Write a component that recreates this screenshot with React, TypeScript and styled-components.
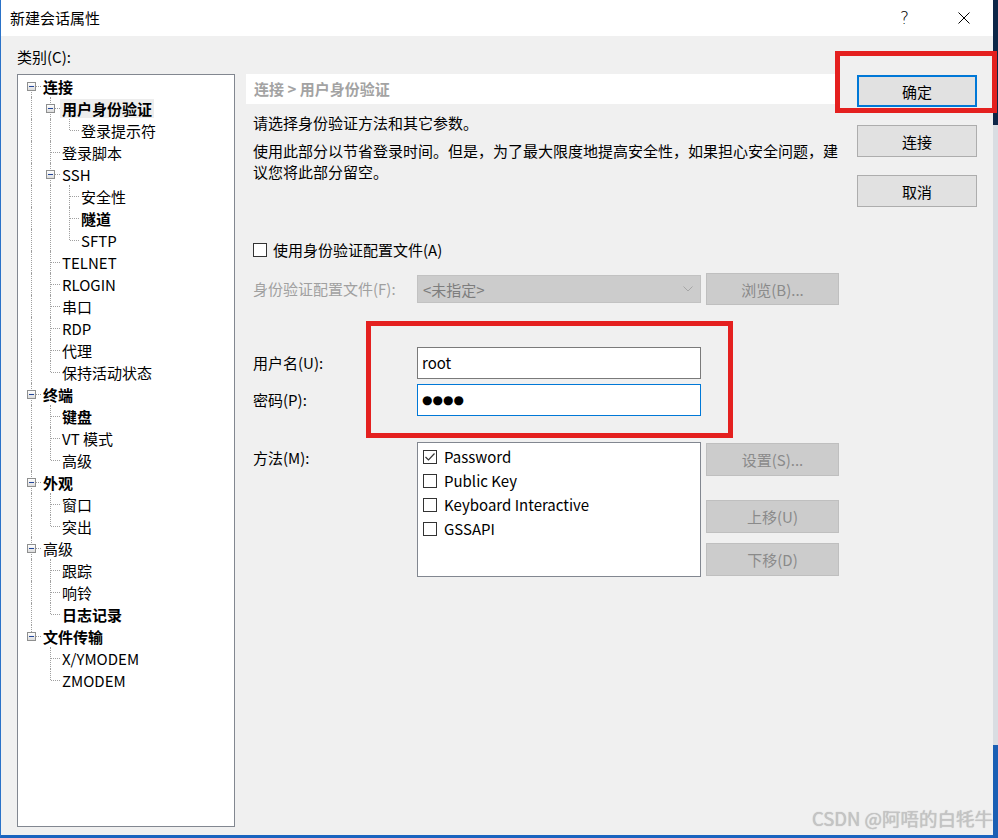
import React from "react";
import styled, { createGlobalStyle } from "styled-components";

const GlobalStyle = createGlobalStyle`
  html, body {
    margin: 0;
    padding: 0;
  }
  body {
    width: 998px;
    height: 838px;
    overflow: hidden;
    background: #f0f0f0;
    font-family: "Noto Sans CJK SC", "Noto Sans", sans-serif;
    color: #000;
  }
  #root {
    height: 100%;
  }
`;

type TreeNode = {
  label: string;
  level: number;
  bold?: boolean;
  open?: boolean;
  selected?: boolean;
};

const tree: TreeNode[] = [
  { label: "连接", level: 0, bold: true, open: true },
  { label: "用户身份验证", level: 1, bold: true, open: true, selected: true },
  { label: "登录提示符", level: 2 },
  { label: "登录脚本", level: 1 },
  { label: "SSH", level: 1, open: true },
  { label: "安全性", level: 2 },
  { label: "隧道", level: 2, bold: true },
  { label: "SFTP", level: 2 },
  { label: "TELNET", level: 1 },
  { label: "RLOGIN", level: 1 },
  { label: "串口", level: 1 },
  { label: "RDP", level: 1 },
  { label: "代理", level: 1 },
  { label: "保持活动状态", level: 1 },
  { label: "终端", level: 0, bold: true, open: true },
  { label: "键盘", level: 1, bold: true },
  { label: "VT 模式", level: 1 },
  { label: "高级", level: 1 },
  { label: "外观", level: 0, bold: true, open: true },
  { label: "窗口", level: 1 },
  { label: "突出", level: 1 },
  { label: "高级", level: 0, open: true },
  { label: "跟踪", level: 1 },
  { label: "响铃", level: 1 },
  { label: "日志记录", level: 1, bold: true },
  { label: "文件传输", level: 0, bold: true, open: true },
  { label: "X/YMODEM", level: 1 },
  { label: "ZMODEM", level: 1 },
];

const hasNext = (i: number) => {
  const lvl = tree[i].level;
  for (let j = i + 1; j < tree.length; j++) {
    if (tree[j].level < lvl) return false;
    if (tree[j].level === lvl) return true;
  }
  return false;
};

const ancestorAt = (i: number, lvl: number) => {
  for (let j = i - 1; j >= 0; j--) {
    if (tree[j].level === lvl) return j;
  }
  return -1;
};

const Page = styled.div`
  display: flex;
  width: 998px;
  height: 838px;
`;

const Window = styled.div`
  position: relative;
  width: 993px;
  height: 838px;
  box-sizing: border-box;
  border-left: 1px solid #2a72c8;
  border-bottom: 3px solid #1a64bf;
  display: flex;
  flex-direction: column;
  background: #f0f0f0;
`;

const Desktop = styled.div`
  flex: 1;
  background: linear-gradient(
    to bottom,
    #0d2748 0,
    #0d2748 125px,
    #d9dde2 125px,
    #d9dde2 745px,
    #1a5fb4 745px
  );
`;

const TitleBar = styled.div`
  height: 36px;
  flex: 0 0 36px;
  background: #fff;
  display: flex;
  align-items: center;
  padding-left: 9px;
  font-size: 15px;
`;

const TitleText = styled.div`
  flex: 1;
  line-height: 20px;
`;

const CaptionButton = styled.div`
  width: 59px;
  height: 36px;
  display: flex;
  align-items: center;
  justify-content: center;
  font-family: "DejaVu Sans", sans-serif;
  font-size: 17px;
  font-weight: 300;
`;

const Body = styled.div`
  flex: 1;
  display: flex;
  padding: 0 0 8px 16px;
  min-height: 0;
`;

const LeftColumn = styled.div`
  width: 218px;
  display: flex;
  flex-direction: column;
`;

const FieldCaption = styled.div`
  margin: 11px 0 7px;
  font-size: 15px;
  line-height: 20px;
`;

const TreeBox = styled.div`
  flex: 1;
  background: #fff;
  border: 1px solid #828790;
  padding: 0 0 0 4px;
`;

const TreeRow = styled.div`
  display: flex;
  align-items: center;
  height: 22px;
`;

const Guide = styled.span<{ $top: boolean; $bottom: boolean; $arm: boolean }>`
  position: relative;
  flex: 0 0 19px;
  height: 22px;

  &::before {
    content: "";
    position: absolute;
    left: 9px;
    top: ${(p) => (p.$top ? "0" : "11px")};
    bottom: ${(p) => (p.$bottom ? "0" : "11px")};
    border-left: 1px dotted #a0a0a0;
    display: ${(p) => (p.$top || p.$bottom ? "block" : "none")};
  }

  &::after {
    content: "";
    position: absolute;
    left: 10px;
    right: 0;
    top: 11px;
    border-top: 1px dotted #a0a0a0;
    display: ${(p) => (p.$arm ? "block" : "none")};
  }
`;

const Expander = styled.span`
  position: absolute;
  left: 5px;
  top: 7px;
  width: 9px;
  height: 9px;
  box-sizing: border-box;
  border: 1px solid #8e8f8f;
  background: linear-gradient(#ffffff, #dcdcdc);
  z-index: 1;

  &::after {
    content: "";
    position: absolute;
    left: 1px;
    top: 3px;
    width: 5px;
    height: 1px;
    background: #24479a;
  }
`;

const NodeLabel = styled.span<{ $bold?: boolean; $selected?: boolean }>`
  padding: 0 2px;
  font-size: 15px;
  line-height: 19px;
  white-space: nowrap;
  font-weight: ${(p) => (p.$bold ? 700 : 400)};
  background: ${(p) => (p.$selected ? "#ededed" : "transparent")};
`;

const RightPanel = styled.div`
  width: 593px;
  margin: 38px 0 0 11px;
  display: flex;
  flex-direction: column;
`;

const PanelHeader = styled.div`
  height: 30px;
  background: #fff;
  padding-left: 8px;
  line-height: 29px;
  font-size: 15px;
  font-weight: 700;
  color: #a3a3a3;
`;

const PanelContent = styled.div`
  padding-left: 7px;
  font-size: 15px;
`;

const Intro = styled.p`
  margin: 8px 0 0;
  line-height: 21px;
`;

const Note = styled.p`
  margin: 7px 0 0;
  line-height: 21px;
`;

const Row = styled.div<{ $mt: number; $align?: string }>`
  display: flex;
  align-items: ${(p) => p.$align || "center"};
  margin-top: ${(p) => p.$mt}px;
`;

const CheckLine = styled.label`
  display: flex;
  align-items: center;
  gap: 6px;
  height: 20px;
  line-height: 20px;
`;

const Box = styled.span`
  width: 14px;
  height: 14px;
  box-sizing: border-box;
  border: 1px solid #333;
  background: #fff;
  display: inline-flex;
  align-items: center;
  justify-content: center;
  flex: 0 0 14px;
`;

const FormLabel = styled.div<{ $disabled?: boolean; $pt?: number }>`
  width: 164px;
  line-height: 20px;
  padding-top: ${(p) => p.$pt || 0}px;
  color: ${(p) => (p.$disabled ? "#a0a0a0" : "#000")};
  white-space: nowrap;
`;

const Combo = styled.div`
  width: 284px;
  height: 28px;
  box-sizing: border-box;
  border: 1px solid #c2c2c2;
  background: #cccccc;
  display: flex;
  align-items: center;
  justify-content: space-between;
  padding: 0 7px 0 5px;
  color: #7d7d7d;
`;

const TextBox = styled.div<{ $focused?: boolean }>`
  width: 284px;
  height: 32px;
  box-sizing: border-box;
  border: 1px solid ${(p) => (p.$focused ? "#0078d7" : "#7a7a7a")};
  background: #fff;
  padding: 0 4px;
  display: flex;
  align-items: center;
  line-height: 20px;
`;

const Dots = styled.span`
  font-family: "DejaVu Sans", sans-serif;
  font-size: 12px;
  line-height: 20px;
`;

const SideButton = styled.button`
  width: 133px;
  height: 32px;
  margin-left: 5px;
  box-sizing: border-box;
  border: 1px solid #bfbfbf;
  background: #cccccc;
  color: #8a8a8a;
  font-family: "Noto Sans CJK SC", "Noto Sans", sans-serif;
  font-size: 15px;
  padding: 0;
`;

const MethodList = styled.div`
  width: 284px;
  height: 135px;
  box-sizing: border-box;
  border: 1px solid #828790;
  background: #fff;
  padding: 2px 0 0 5px;
`;

const MethodItem = styled.div`
  display: flex;
  align-items: center;
  gap: 7px;
  height: 24px;
  line-height: 20px;
`;

const MethodButtons = styled.div`
  display: flex;
  flex-direction: column;
  padding-top: 1px;
`;

const StackButton = styled(SideButton)<{ $mt: number }>`
  height: 33px;
  margin-top: ${(p) => p.$mt}px;
`;

const ButtonColumn = styled.div`
  display: flex;
  flex-direction: column;
  gap: 18px;
  margin: 39px 0 0 18px;
`;

const DialogButton = styled.button<{ $default?: boolean }>`
  width: 120px;
  height: 32px;
  box-sizing: border-box;
  background: #e1e1e1;
  border: ${(p) => (p.$default ? "2px solid #0078d7" : "1px solid #adadad")};
  font-family: "Noto Sans CJK SC", "Noto Sans", sans-serif;
  font-size: 15px;
  color: #000;
  padding: 0;
`;

const Highlight = styled.div<{ $x: number; $y: number; $w: number; $h: number }>`
  position: absolute;
  left: ${(p) => p.$x}px;
  top: ${(p) => p.$y}px;
  width: ${(p) => p.$w}px;
  height: ${(p) => p.$h}px;
  box-sizing: border-box;
  border: 5px solid #e4201f;
  pointer-events: none;
`;

const Watermark = styled.div`
  position: absolute;
  right: 0;
  bottom: 5px;
  font-size: 18.5px;
  line-height: 24px;
  color: #c4c4c4;
  text-shadow: 0 0 1px rgba(0, 0, 0, 0.25);
  white-space: nowrap;
`;

const Check = () => (
  <svg width="12" height="12" viewBox="0 0 12 12">
    <polyline points="1.5,6 4.5,9 10.5,2.5" fill="none" stroke="#333" strokeWidth="1.2" />
  </svg>
);

const CloseIcon = () => (
  <svg width="12" height="12" viewBox="0 0 12 12">
    <path d="M0.5 0.5 L11.5 11.5 M11.5 0.5 L0.5 11.5" stroke="#000" strokeWidth="1" />
  </svg>
);

const Chevron = () => (
  <svg width="10" height="6" viewBox="0 0 10 6">
    <polyline points="0.5,0.5 5,5 9.5,0.5" fill="none" stroke="#a6a6a6" strokeWidth="1" />
  </svg>
);

const Tree = () => (
  <TreeBox>
    {tree.map((node, i) => {
      const guides = [];
      for (let l = 0; l < node.level; l++) {
        const through = hasNext(ancestorAt(i, l));
        guides.push(<Guide key={l} $top={through} $bottom={through} $arm={false} />);
      }
      guides.push(
        <Guide key="own" $top={i !== 0} $bottom={hasNext(i)} $arm>
          {node.open && <Expander />}
        </Guide>
      );
      return (
        <TreeRow key={i}>
          {guides}
          <NodeLabel $bold={node.bold} $selected={node.selected}>
            {node.label}
          </NodeLabel>
        </TreeRow>
      );
    })}
  </TreeBox>
);

const methods = [
  { name: "Password", on: true },
  { name: "Public Key", on: false },
  { name: "Keyboard Interactive", on: false },
  { name: "GSSAPI", on: false },
];

export default function App() {
  return (
    <Page>
      <GlobalStyle />
      <Window>
        <TitleBar>
          <TitleText>新建会话属性</TitleText>
          <CaptionButton>?</CaptionButton>
          <CaptionButton>
            <CloseIcon />
          </CaptionButton>
        </TitleBar>
        <Body>
          <LeftColumn>
            <FieldCaption>类别(C):</FieldCaption>
            <Tree />
          </LeftColumn>
          <RightPanel>
            <PanelHeader>连接 &gt; 用户身份验证</PanelHeader>
            <PanelContent>
              <Intro>请选择身份验证方法和其它参数。</Intro>
              <Note>
                使用此部分以节省登录时间。但是，为了最大限度地提高安全性，如果担心安全问题，建议您将此部分留空。
              </Note>
              <Row $mt={58}>
                <CheckLine>
                  <Box />
                  使用身份验证配置文件(A)
                </CheckLine>
              </Row>
              <Row $mt={13}>
                <FormLabel $disabled>身份验证配置文件(F):</FormLabel>
                <Combo>
                  <span>&lt;未指定&gt;</span>
                  <Chevron />
                </Combo>
                <SideButton disabled>浏览(B)...</SideButton>
              </Row>
              <Row $mt={42}>
                <FormLabel>用户名(U):</FormLabel>
                <TextBox>root</TextBox>
              </Row>
              <Row $mt={5}>
                <FormLabel>密码(P):</FormLabel>
                <TextBox $focused>
                  <Dots>●●●●</Dots>
                </TextBox>
              </Row>
              <Row $mt={26} $align="flex-start">
                <FormLabel $pt={6}>方法(M):</FormLabel>
                <MethodList>
                  {methods.map((m) => (
                    <MethodItem key={m.name}>
                      <Box>{m.on && <Check />}</Box>
                      {m.name}
                    </MethodItem>
                  ))}
                </MethodList>
                <MethodButtons>
                  <StackButton $mt={0} disabled>
                    设置(S)...
                  </StackButton>
                  <StackButton $mt={24} disabled>
                    上移(U)
                  </StackButton>
                  <StackButton $mt={10} disabled>
                    下移(D)
                  </StackButton>
                </MethodButtons>
              </Row>
            </PanelContent>
          </RightPanel>
          <ButtonColumn>
            <DialogButton $default>确定</DialogButton>
            <DialogButton>连接</DialogButton>
            <DialogButton>取消</DialogButton>
          </ButtonColumn>
        </Body>
        <Highlight $x={834} $y={51} $w={162} $h={62} />
        <Highlight $x={365} $y={321} $w={367} $h={117} />
        <Watermark>CSDN @阿唔的白牦牛</Watermark>
      </Window>
      <Desktop />
    </Page>
  );
}
